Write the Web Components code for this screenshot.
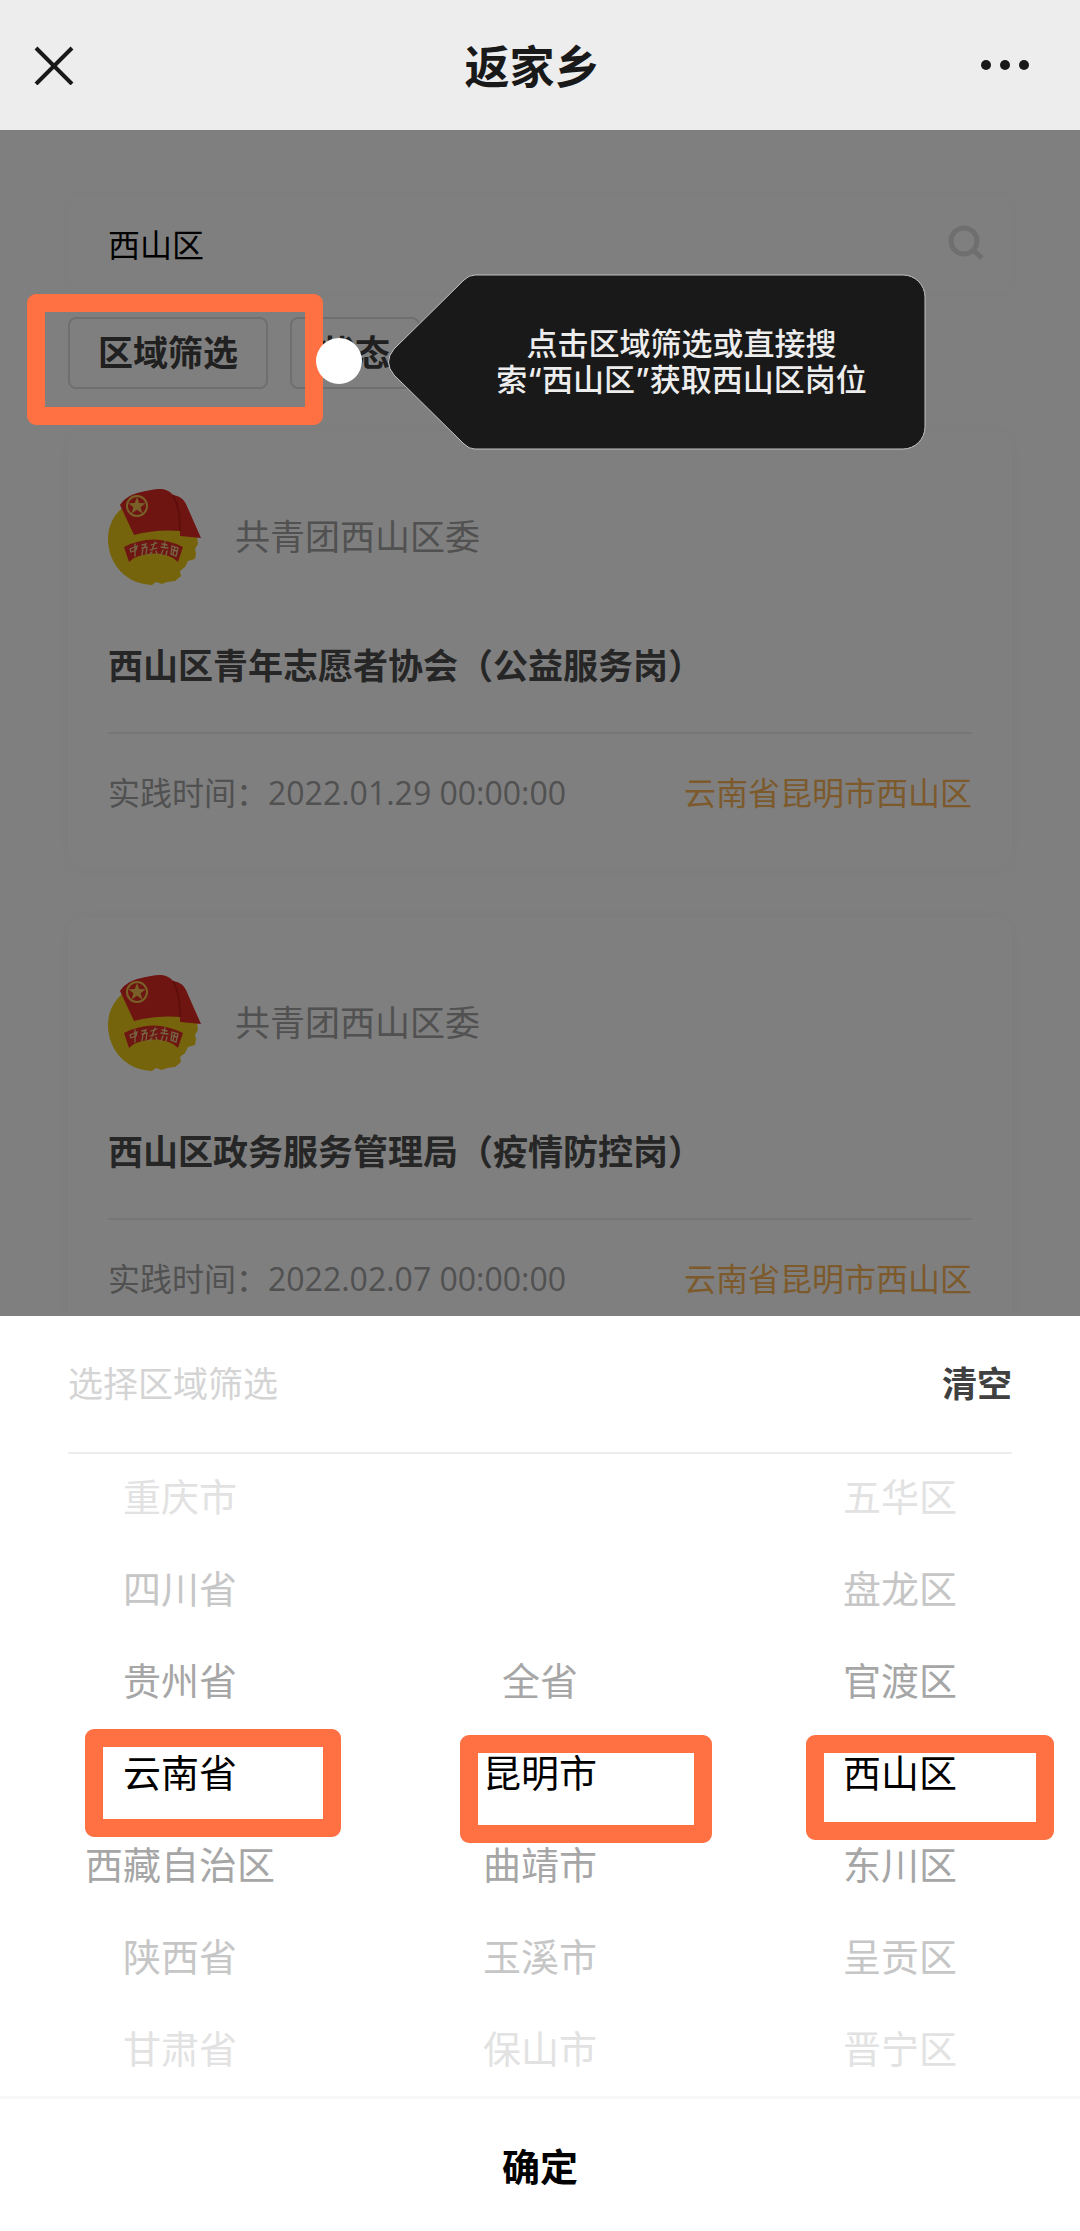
<!DOCTYPE html>
<html lang="zh-CN">
<head>
<meta charset="utf-8">
<meta name="viewport" content="width=device-width, initial-scale=1">
<title>返家乡</title>
<style>
  :root {
    --accent: #ff7043;
    --text-l: 38px;
    --text-m: 35px;
    --text-s: 32px;
  }
  body {
    margin: 0;
    font-family: "Open Sans", "Noto Sans CJK SC", sans-serif;
    background: #fff;
  }
</style>
</head>
<body>
<home-app></home-app>

<script>
(function() {

  // Shared helper: every element gets an open shadow root filled from a string
  class BaseElement extends HTMLElement {
    constructor() {
      super();
      this.attachShadow({ mode: 'open' });
    }
    connectedCallback() {
      this.shadowRoot.innerHTML = `
        <style>
          *, *::before, *::after { box-sizing: border-box; }
          :host { box-sizing: border-box; }
          button { font-family: inherit; padding: 0; border: 0; background: none; cursor: pointer; }
        </style>` + this.render();
    }
  }

  // Top bar of the web view
  class NavBar extends BaseElement {
    render() {
      return `
        <style>
          :host {
            display: grid;
            grid-template-columns: 1fr auto 1fr;
            align-items: center;
            height: 130px;
            flex: none;
            padding: 0 50px 0 34px;
            background: #ededed;
            color: #191919;
          }
          h1 { margin: 0; padding-top: 4px; font-size: 45px; line-height: 64px; font-weight: 700; }
          button { display: flex; color: inherit; }
          .more { justify-self: end; }
          svg { display: block; }
        </style>
        <button aria-label="关闭">
          <svg width="40" height="40" viewBox="0 0 40 40" fill="none" stroke="currentColor" stroke-width="4"><path d="M2 3l36 36M38 3L2 39"/></svg>
        </button>
        <h1><slot></slot></h1>
        <button class="more" aria-label="更多">
          <svg width="50" height="12" viewBox="0 0 50 12" fill="currentColor"><circle cx="6" cy="6" r="5"/><circle cx="25" cy="6" r="5"/><circle cx="44" cy="6" r="5"/></svg>
        </button>
      `;
    }
  }

  class SearchBox extends BaseElement {
    render() {
      return `
        <style>
          :host {
            display: flex;
            align-items: center;
            height: 98px;
            padding: 0 28px 0 40px;
            border-radius: 10px;
            background: #fff;
            box-shadow: 0 0 12px rgba(0,0,0,.03);
          }
          input {
            flex: 1;
            min-width: 0;
            padding: 0 0 3px;
            border: 0;
            outline: 0;
            background: none;
            color: #000;
            font: 400 var(--text-s)/48px "Noto Sans CJK SC", sans-serif;
          }
        </style>
        <input type="text" aria-label="搜索" value="${this.getAttribute('value')}">
        <button aria-label="搜索">
          <svg width="36" height="36" viewBox="0 0 36 36" fill="none" stroke="#dedede" stroke-width="5"><circle cx="16" cy="17" r="13"/><path d="M26 27l8 7"/></svg>
        </button>
      `;
    }
  }

  class FilterButton extends BaseElement {
    render() {
      return `
        <style>
          :host { display: block; }
          button {
            padding: 0 28px;
            border: 2px solid #dedede;
            border-radius: 8px;
            color: #404040;
            font-size: var(--text-m);
            line-height: 68px;
            font-weight: 700;
          }
        </style>
        <button><slot></slot></button>
      `;
    }
  }

  // Round league badge: globe, flag and ribbon
  class LeagueBadge extends BaseElement {
    render() {
      return `
        <style>
          :host { display: block; }
          svg { display: block; }
        </style>
        <svg width="95" height="96" viewBox="0 0 95 96" role="img" aria-label="团徽">
          <path fill="#ecc918" d="M14 19C4 28 0 39 0 50c0 25 18 45 44 46l4-3 6 2 5-2 8-1 6-5-1-5 5-4 3-6 7-2 1-6-1-4 3-5-1-7V40L60 14z"/>
          <path fill="#dd2a24" d="M12 16C20 4 34 3 43 1c10-2 17-1 22 5 6 1 10 3 13 9l15 34-21-2V42q-24-2-46 4z"/>
          <path fill="none" stroke="#bd1f19" stroke-width="2" d="M65 6c4 8 7 15 7 36"/>
          <circle cx="29" cy="17" r="10" fill="none" stroke="#f0c050" stroke-width="2"/>
          <path fill="#f0c050" d="M29 8l2.200 6 6.400.200-5 4 1.800 6.200-5.400-3.600-5.400 3.600 1.800-6.200-5-4 6.400-.200z"/>
          <path fill="#dd2e24" d="M16 58q29-15 59 0l-5 15-5-4q-18-9-39 0l-5 4z"/>
          <g fill="none" stroke="#eccb88" stroke-width="1.300" stroke-linecap="round">
            <path d="M22 60l7-3-1 4-5 2zM27 55l0 12M34 56l4-1-2 4M34 59l5-1-1 7M35 59l-1 7M43 56l6-2M47 53l-3 8M42 61l7-2M44 63l-3 3M48 62l1 3M54 55l5 1M57 53l-1 6M53 58l7 1M55 61l-2 5M59 62l-1 4M64 57l6 2-2 8-5-2zM65 61l4 1M67 58l-2 7"/>
          </g>
        </svg>
      `;
    }
  }

  class JobCard extends BaseElement {
    render() {
      return `
        <style>
          :host {
            display: block;
            padding: 58px 40px 52px 40px;
            border-radius: 16px;
            background: #fff;
            box-shadow: 0 0 16px rgba(0,0,0,.04);
          }
          .org { display: flex; align-items: center; gap: 32px; color: #a2a2a2; font-size: var(--text-m); line-height: 52px; }
          h2 {
            margin: 55px 0 0;
            padding-bottom: 40px;
            border-bottom: 2px solid #ececec;
            color: #4c4c4c;
            font-size: var(--text-m);
            line-height: 52px;
            font-weight: 700;
            white-space: nowrap;
          }
          .meta { display: flex; justify-content: space-between; padding-top: 35px; color: #a2a2a2; font-size: var(--text-s); line-height: 48px; }
          .place { color: #f8b458; }
        </style>
        <div class="org"><league-badge></league-badge><span>${this.getAttribute('org')}</span></div>
        <h2><slot></slot></h2>
        <div class="meta">
          <span>实践时间：${this.getAttribute('time')}</span>
          <span class="place">${this.getAttribute('place')}</span>
        </div>
      `;
    }
  }

  // Orange frame that points out a control; its user sets place and size
  class HighlightFrame extends BaseElement {
    render() {
      return `
        <style>
          :host {
            display: block;
            position: absolute;
            border: 18px solid var(--accent);
            border-radius: 9px;
            pointer-events: none;
          }
        </style>
      `;
    }
  }

  // Dark speech bubble with its tip on the left
  class HintBubble extends BaseElement {
    render() {
      return `
        <style>
          :host { display: block; position: absolute; width: 538px; height: 176px; }
          svg { position: absolute; inset: 0; }
          p {
            position: relative;
            display: grid;
            place-content: center;
            height: 100%;
            margin: 0;
            padding-left: 49px;
            color: #ededed;
            font-family: Inter, "Noto Sans CJK SC", sans-serif;
            font-size: 31px;
            line-height: 36px;
            font-weight: 500;
            text-align: center;
          }
        </style>
        <svg width="538" height="176" viewBox="0 0 538 176">
          <path fill="#191919" stroke="#c4c4c4" stroke-width="1" d="M87 1H515a22 22 0 0 1 22 22V153a22 22 0 0 1-22 22H87q-6 0-11-5L6 101Q-5 88 6 75L76 6q5-5 11-5z"/>
        </svg>
        <p><span><slot></slot></span></p>
      `;
    }
  }

  class PickerColumn extends BaseElement {
    render() {
      const items = this.getAttribute('items').split(',');
      const selected = items.indexOf(this.getAttribute('value'));
      const rows = items.map((t, i) => {
        const far = Math.abs(i - selected);
        return `<li role="option" class="far-${far}" aria-selected="${far === 0}">${t}</li>`;
      }).join('');
      return `
        <style>
          :host { display: block; flex: 1; }
          ul { margin: 0; padding: 0; list-style: none; text-align: center; }
          li { height: 92px; font-size: var(--text-l); line-height: 92px; white-space: nowrap; }
          .far-0 { color: #000; }
          .far-1 { color: #a6a6a6; }
          .far-2 { color: #c6c6c6; }
          .far-3 { color: #e2e2e2; }
        </style>
        <ul role="listbox" aria-label="${this.getAttribute('label')}">${rows}</ul>
      `;
    }
  }

  // Bottom sheet with the three wheels
  class RegionSheet extends BaseElement {
    render() {
      return `
        <style>
          :host { display: block; flex: none; background: #fff; }
          header {
            display: flex;
            justify-content: space-between;
            align-items: center;
            height: 138px;
            margin: 0 68px;
            border-bottom: 2px solid #ededed;
            font-size: var(--text-m);
            line-height: 52px;
          }
          header span { color: #d4d4d4; }
          .clear { color: #404040; font-size: inherit; line-height: inherit; font-weight: 700; }
          .wheels { position: relative; display: flex; align-items: flex-end; margin-top: -4px; padding-bottom: 2px; }
          .ok {
            display: block;
            width: 100%;
            padding-top: 2px;
            border-top: 3px solid #f7f7f7;
            color: #000;
            font-size: var(--text-l);
            line-height: 130px;
            font-weight: 700;
          }
          .province { left: 85px; top: 279px; width: 256px; height: 108px; }
          .city { left: 460px; top: 285px; width: 252px; height: 108px; }
          .district { left: 806px; top: 285px; width: 248px; height: 105px; }
        </style>
        <header><span>选择区域筛选</span><button class="clear">清空</button></header>
        <div class="wheels">
          <highlight-frame class="province"></highlight-frame>
          <highlight-frame class="city"></highlight-frame>
          <highlight-frame class="district"></highlight-frame>
          <picker-column label="省" value="云南省" items="重庆市,四川省,贵州省,云南省,西藏自治区,陕西省,甘肃省"></picker-column>
          <picker-column label="市" value="昆明市" items="全省,昆明市,曲靖市,玉溪市,保山市"></picker-column>
          <picker-column label="区" value="西山区" items="五华区,盘龙区,官渡区,西山区,东川区,呈贡区,晋宁区"></picker-column>
        </div>
        <button class="ok">确定</button>
      `;
    }
  }

  class HomeApp extends BaseElement {
    render() {
      return `
        <style>
          :host { display: flex; flex-direction: column; height: 100vh; }
          main { position: relative; flex: 1; min-height: 0; overflow: hidden; padding: 65px 68px 0; }
          .filters { display: flex; gap: 22px; padding: 24px 0 42px; }
          .cards { display: grid; gap: 48px; }
          .mask { position: absolute; inset: 0; background: rgba(0,0,0,.5); }
          highlight-frame { left: 27px; top: 164px; width: 296px; height: 131px; }
          .dot { position: absolute; left: 316px; top: 208px; width: 46px; height: 46px; border-radius: 50%; background: #fff; }
          hint-bubble { left: 388px; top: 144px; }
        </style>
        <nav-bar>返家乡</nav-bar>
        <main>
          <search-box value="西山区"></search-box>
          <div class="filters">
            <filter-button>区域筛选</filter-button>
            <filter-button>状态</filter-button>
          </div>
          <div class="cards">
            <job-card org="共青团西山区委" time="2022.01.29 00:00:00" place="云南省昆明市西山区">西山区青年志愿者协会（公益服务岗）</job-card>
            <job-card org="共青团西山区委" time="2022.02.07 00:00:00" place="云南省昆明市西山区">西山区政务服务管理局（疫情防控岗）</job-card>
          </div>
          <div class="mask"></div>
          <highlight-frame></highlight-frame>
          <hint-bubble>点击区域筛选或直接搜<br>索“西山区”获取西山区岗位</hint-bubble>
          <div class="dot"></div>
        </main>
        <region-sheet></region-sheet>
      `;
    }
  }

  customElements.define('nav-bar', NavBar);
  customElements.define('search-box', SearchBox);
  customElements.define('filter-button', FilterButton);
  customElements.define('league-badge', LeagueBadge);
  customElements.define('job-card', JobCard);
  customElements.define('highlight-frame', HighlightFrame);
  customElements.define('hint-bubble', HintBubble);
  customElements.define('picker-column', PickerColumn);
  customElements.define('region-sheet', RegionSheet);
  customElements.define('home-app', HomeApp);

})();
</script>
</body>
</html>
